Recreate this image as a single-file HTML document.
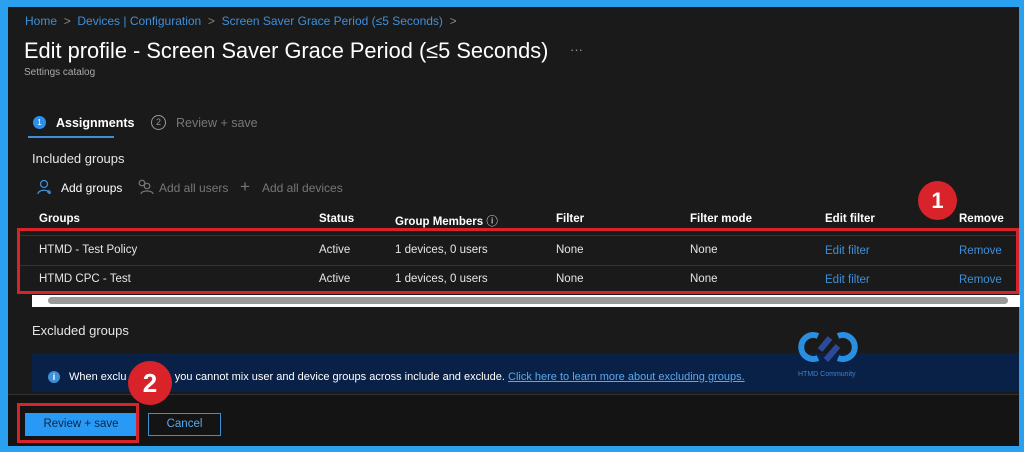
<!DOCTYPE html>
<html><head><meta charset="utf-8">
<style>
*{margin:0;padding:0;box-sizing:border-box}
body{width:1024px;height:452px;background:#2aa0ef;font-family:"Liberation Sans",sans-serif;position:relative;overflow:hidden}
#p{position:absolute;left:8px;top:7px;width:1011px;height:439px;background:#1b1a1a}
.a{position:absolute;white-space:nowrap}
.bc{color:#3f8fd8;font-size:12px;top:14px}
.h{color:#fff;font-size:11.5px;font-weight:bold;top:213px}
.c{color:#e6e6e6;font-size:11.5px}
.l{color:#3f8fd8;font-size:11.5px}
.g{color:#777;font-size:12px}
.sep{position:absolute;left:18px;width:1000px;height:1px;background:#333}
.circ{position:absolute;border-radius:50%;background:#d8232a;color:#fff;font-weight:bold;text-align:center}
</style></head><body>
<div id="p"></div>
<div class="a bc" style="left:25px">Home &nbsp;<span style="color:#888">&gt;</span>&nbsp; Devices | Configuration &nbsp;<span style="color:#888">&gt;</span>&nbsp; Screen Saver Grace Period (≤5 Seconds) &nbsp;<span style="color:#888">&gt;</span></div>
<div class="a" style="left:24px;top:38px;color:#fff;font-size:21.8px">Edit profile - Screen Saver Grace Period (≤5 Seconds)</div>
<div class="a" style="left:570px;top:42px;color:#999;font-size:13px">···</div>
<div class="a" style="left:24px;top:67px;color:#aaa;font-size:10px">Settings catalog</div>
<div class="a" style="left:33px;top:116px;width:13px;height:13px;border-radius:50%;background:#2b8ff0;color:#fff;font-size:8px;text-align:center;line-height:13px">1</div>
<div class="a" style="left:56px;top:116px;color:#fff;font-size:12.5px;font-weight:bold">Assignments</div>
<div class="a" style="left:28px;top:136px;width:86px;height:2px;background:#3f8fd8"></div>
<div class="a" style="left:151px;top:115px;width:15px;height:15px;border-radius:50%;border:1px solid #999;color:#999;font-size:9px;text-align:center;line-height:13px">2</div>
<div class="a" style="left:176px;top:116px;color:#777;font-size:12.5px">Review + save</div>
<div class="a c" style="left:32px;top:151px;font-size:13px">Included groups</div>
<svg class="a" style="left:37px;top:179px" width="16" height="16" viewBox="0 0 16 16"><circle cx="7" cy="5" r="3.5" stroke="#3f8fd8" stroke-width="1.3" fill="none"/><path d="M1 15 C1 10 13 10 13 15" stroke="#3f8fd8" stroke-width="1.3" fill="none"/><path d="M12 11v4M10 13h4" stroke="#3f8fd8" stroke-width="1.3"/></svg>
<div class="a c" style="left:61px;top:181px;font-size:12px;color:#fff">Add groups</div>
<svg class="a" style="left:136px;top:179px" width="18" height="16" viewBox="0 0 18 16"><circle cx="6" cy="4" r="2.8" stroke="#777" stroke-width="1.2" fill="none"/><circle cx="11" cy="7" r="2.8" stroke="#777" stroke-width="1.2" fill="none"/><path d="M5 15 C5 11 17 11 17 15" stroke="#777" stroke-width="1.2" fill="none"/></svg>
<div class="a g" style="left:159px;top:181px">Add all users</div>
<div class="a g" style="left:240px;top:177px;font-size:17px">+</div>
<div class="a g" style="left:262px;top:181px">Add all devices</div>
<div class="a h" style="left:39px">Groups</div>
<div class="a h" style="left:319px">Status</div>
<div class="a h" style="left:395px">Group Members <span style="font-weight:normal">ⓘ</span></div>
<div class="a h" style="left:556px">Filter</div>
<div class="a h" style="left:690px">Filter mode</div>
<div class="a h" style="left:825px">Edit filter</div>
<div class="a h" style="left:959px">Remove</div>
<div class="sep" style="top:235px"></div>
<div class="sep" style="top:265px"></div>
<div class="a c" style="left:39px;top:244px">HTMD - Test Policy</div>
<div class="a c" style="left:319px;top:244px">Active</div>
<div class="a c" style="left:395px;top:244px">1 devices, 0 users</div>
<div class="a c" style="left:556px;top:244px">None</div>
<div class="a c" style="left:690px;top:244px">None</div>
<div class="a l" style="left:825px;top:245px">Edit filter</div>
<div class="a l" style="left:959px;top:245px">Remove</div>
<div class="a c" style="left:39px;top:273px">HTMD CPC - Test</div>
<div class="a c" style="left:319px;top:273px">Active</div>
<div class="a c" style="left:395px;top:273px">1 devices, 0 users</div>
<div class="a c" style="left:556px;top:273px">None</div>
<div class="a c" style="left:690px;top:273px">None</div>
<div class="a l" style="left:825px;top:274px">Edit filter</div>
<div class="a l" style="left:959px;top:274px">Remove</div>
<div class="a" style="left:17px;top:228px;width:1002px;height:66px;border:3px solid #d8232a"></div>
<div class="a" style="left:32px;top:295px;width:988px;height:12px;background:#fff"></div>
<div class="a" style="left:48px;top:297px;width:960px;height:7px;border-radius:4px;background:#999"></div>
<div class="a c" style="left:32px;top:323px;font-size:13px">Excluded groups</div>
<div class="a" style="left:32px;top:353px;width:987px;height:39px;background:#0a2147"></div>
<div class="a" style="left:48px;top:371px;width:12px;height:12px;border-radius:50%;background:#3f8fd8;color:#fff;font-size:9px;text-align:center;line-height:12px;font-weight:bold">i</div>
<div class="a" style="left:69px;top:371px;color:#fff;font-size:11px">When exclu&nbsp;&nbsp;&nbsp;&nbsp;&nbsp;&nbsp;&nbsp;&nbsp;&nbsp;&nbsp;ps, you cannot mix user and device groups across include and exclude. <span style="color:#5aa8ee;text-decoration:underline">Click here to learn more about excluding groups.</span></div>
<svg class="a" style="left:796px;top:328px" width="70" height="40" viewBox="0 0 70 40"><path d="M22 8 A12 12 0 1 0 22 30" stroke="#2a8fe0" stroke-width="6" fill="none"/><path d="M42 8 A12 12 0 1 1 42 30" stroke="#2a8fe0" stroke-width="6" fill="none"/><path d="M24 22 L34 10 M30 32 L42 18" stroke="#2c4a9a" stroke-width="6"/></svg>
<div class="a" style="left:798px;top:371px;color:#3f7fd0;font-size:7px">HTMD Community</div>
<div class="a" style="left:8px;top:394px;width:1011px;height:1px;background:#333"></div>
<div class="a" style="left:8px;top:395px;width:1011px;height:51px;background:#141414"></div>
<div class="a" style="left:25px;top:413px;width:112px;height:23px;background:#2899f5;color:#0e2742;font-size:11.5px;text-align:center;line-height:23px">Review + save</div>
<div class="a" style="left:17px;top:403px;width:122px;height:40px;border:3px solid #d8232a"></div>
<div class="a" style="left:148px;top:413px;width:73px;height:23px;border:1px solid #3f8fd8;color:#5aa8ee;font-size:11.5px;text-align:center;line-height:21px">Cancel</div>
<div class="circ" style="left:918px;top:181px;width:39px;height:39px;font-size:22px;line-height:39px">1</div>
<div class="circ" style="left:128px;top:361px;width:44px;height:44px;font-size:26px;line-height:44px">2</div>
</body></html>
